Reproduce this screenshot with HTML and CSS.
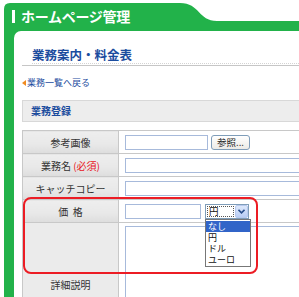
FILE: index.html
```html
<!DOCTYPE html>
<html lang="ja">
<head>
    <meta charset="UTF-8">
    <meta name="viewport" content="width=device-width, initial-scale=1.0">
    <title>ホームページ管理</title>
    <link rel="stylesheet" href="styles.css">
</head>
<body>
    <div class="frame">
        <div class="head">
            <svg class="head-shape" width="295" height="28" viewBox="0 0 295 28">
                <path d="M0,6 Q0,0 6,0 L176,0 C196,0 194,18 213,18 L295,18 L295,28 L0,28 Z" fill="#22b24a"/>
            </svg>
            <div class="head-title"><span class="head-bar"></span>ホームページ管理</div>
        </div>

        <div class="main">
            <div class="content">
                <h1 class="title"><span>業務案内・料金表</span></h1>

                <a class="back" href="#"><span class="back-arrow"></span>業務一覧へ戻る</a>

                <div class="section-bar">業務登録</div>

                <div class="form-wrap">
                    <table class="form">
                        <colgroup>
                            <col class="col-label">
                            <col>
                        </colgroup>
                        <tr>
                            <th>参考画像</th>
                            <td>
                                <span class="input short"></span>
                                <span class="btn">参照...</span>
                            </td>
                        </tr>
                        <tr>
                            <th>業務名 <span class="req">(必須)</span></th>
                            <td><span class="input long"></span></td>
                        </tr>
                        <tr>
                            <th>キャッチコピー</th>
                            <td><span class="input long"></span></td>
                        </tr>
                        <tr>
                            <th>価&nbsp;&nbsp;格</th>
                            <td>
                                <span class="input price"></span>
                                <span class="select">
                                    <span class="select-value">円</span>
                                    <span class="select-arrow">
                                        <svg width="7" height="5" viewBox="0 0 7 5"><path d="M0.5,0.8 L3.5,3.8 L6.5,0.8" fill="none" stroke="#2a4f8c" stroke-width="1.6"/></svg>
                                    </span>
                                    <span class="dropdown">
                                        <span class="opt active">なし</span>
                                        <span class="opt">円</span>
                                        <span class="opt">ドル</span>
                                        <span class="opt">ユーロ</span>
                                    </span>
                                </span>
                            </td>
                        </tr>
                        <tr class="tall">
                            <th>詳細説明</th>
                            <td><span class="textarea"></span></td>
                        </tr>
                    </table>
                    <div class="highlight"></div>
                </div>
            </div>
        </div>
    </div>
</body>
</html>
```

FILE: styles.css
```css
* {
    box-sizing: border-box;
    font-family: "Noto Sans CJK JP", "Noto Sans", sans-serif;
}

body {
    margin: 0;
    background-color: #fff;
    overflow: hidden;
}

.frame {
    margin: 3px 0 0 4px;
}

.head {
    display: grid;
    height: 28px;
}

.head-shape,
.head-title {
    grid-area: 1 / 1;
}

.head-title {
    display: flex;
    align-items: center;
    height: 26px;
    padding-left: 8px;
    color: #fff;
    font-size: 14px;
    font-weight: bold;
    letter-spacing: -0.3px;
}

.head-bar {
    width: 3px;
    height: 13px;
    margin-right: 6px;
    background-color: #fff;
}

.main {
    background-color: #22b24a;
    padding-left: 10px;
    height: 266px;
    overflow: hidden;
}

.content {
    background-color: #fff;
    border-top-left-radius: 7px;
    padding: 17px 0 0 8px;
    height: 266px;
    overflow: hidden;
}

.title {
    margin: 0;
    padding-left: 10px;
    font-size: 12.5px;
    font-weight: bold;
    color: #1b4c9e;
    line-height: 14px;
    border-bottom: 1px solid #c6c6c6;
    padding-bottom: 1px;
}

.title span {
    display: block;
    padding-bottom: 1px;
    border-bottom: 1px dotted #d4d4d4;
}

.back {
    display: flex;
    align-items: center;
    margin-top: 12px;
    font-size: 9px;
    color: #1b4c9e;
    text-decoration: none;
    line-height: 10px;
}

.back-arrow {
    width: 0;
    height: 0;
    border-top: 3px solid transparent;
    border-bottom: 3px solid transparent;
    border-right: 4px solid #f08a20;
    margin-right: 1px;
}

.section-bar {
    margin-top: 12px;
    height: 22px;
    line-height: 20px;
    padding-left: 8px;
    background-color: #ededed;
    border: 1px solid #d8d8d8;
    border-right: none;
    font-size: 10px;
    font-weight: bold;
    color: #1b4c9e;
}

.form-wrap {
    position: relative;
    margin-top: 8px;
}

.form {
    width: 100%;
    table-layout: fixed;
    border-collapse: collapse;
    border-top: 1px solid #c8c8c8;
}

.col-label {
    width: 96px;
}

.form th,
.form td {
    height: 23px;
    padding: 0;
    border-bottom: 1px solid #c8c8c8;
}

.form th {
    font-size: 10px;
    font-weight: normal;
    color: #333;
    text-align: center;
    white-space: nowrap;
    background: linear-gradient(#eeeeee, #e8e8e8 60%, #dddddd);
    border-left: 1px solid #c8c8c8;
    border-right: 1px solid #c8c8c8;
}

.form td {
    padding-left: 6px;
    white-space: nowrap;
    overflow: visible;
    font-size: 0;
}

.form .tall th,
.form .tall td {
    height: 124px;
    vertical-align: top;
}

.form .tall th {
    vertical-align: middle;
    background: #ebebeb;
}

.form .tall td {
    padding-top: 3px;
}

.req {
    color: #e8141c;
}

.input,
.textarea {
    display: inline-block;
    vertical-align: middle;
    height: 15px;
    border: 1px solid #a7badb;
    background-color: #fff;
}

.short {
    width: 83px;
}

.long {
    width: 200px;
}

.price {
    width: 76px;
}

.textarea {
    width: 200px;
    height: 120px;
}

.btn {
    display: inline-block;
    vertical-align: middle;
    width: 39px;
    height: 15px;
    margin-left: 3px;
    border: 1px solid #7f9db9;
    border-radius: 3px;
    background: linear-gradient(#ffffff, #ecebe6);
    font-size: 9.5px;
    line-height: 13px;
    text-align: center;
    color: #222;
}

.select {
    position: relative;
    display: inline-flex;
    vertical-align: middle;
    width: 44px;
    height: 15px;
    margin-left: 4px;
    border: 1px solid #7f9db9;
    background-color: #fff;
}

.select-value {
    flex: 1;
    margin: 1px;
    outline: 1px dotted #555;
    outline-offset: -1px;
    font-size: 9.5px;
    line-height: 11px;
    padding-left: 2px;
    color: #111;
}

.select-arrow {
    display: flex;
    align-items: center;
    justify-content: center;
    width: 13px;
    background: linear-gradient(#dde8fb, #b9cdf5);
    border: 1px solid #b7c9ee;
    border-radius: 2px;
}

.dropdown {
    position: absolute;
    top: 14px;
    left: -1px;
    width: 46px;
    display: flex;
    flex-direction: column;
    padding: 1px 0;
    border: 1px solid #777;
    background-color: #fff;
}

.opt {
    font-size: 9px;
    line-height: 11px;
    height: 11px;
    padding-left: 2px;
    color: #111;
}

.opt.active {
    background-color: #3164c8;
    color: #fff;
}

.highlight {
    position: absolute;
    top: 67px;
    left: 1px;
    width: 235px;
    height: 77px;
    border: 2px solid #ec1c24;
    border-radius: 8px;
    pointer-events: none;
}
```
